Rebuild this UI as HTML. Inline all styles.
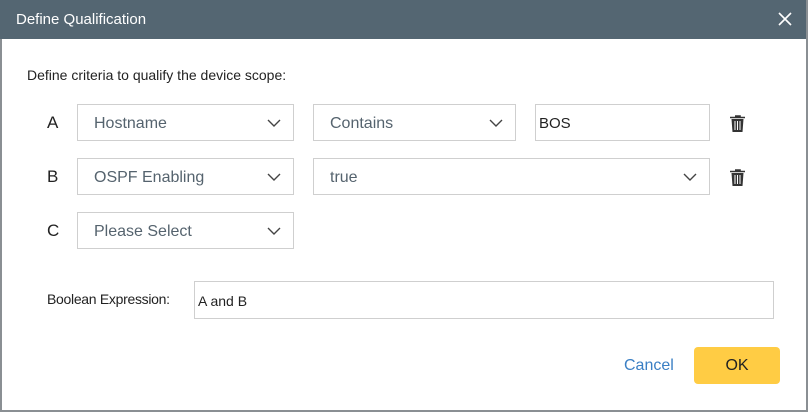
<!DOCTYPE html><html><head><style>
body{margin:0;width:808px;height:414px;background:#fff;font-family:"Liberation Sans",sans-serif;position:relative;overflow:hidden}
.dlg{position:absolute;left:0;top:0;width:804px;height:410px;border:2px solid #8a8f93;border-top:none;box-sizing:content-box;background:#fff}
.hd{position:absolute;left:0;top:0;width:806px;height:39px;background:#546672;color:#fff;font-size:15px;line-height:40px;padding-left:16px;box-sizing:border-box}
.x{position:absolute;right:14px;top:12px}
.a{position:absolute;font-size:14px;color:#222}
.box{position:absolute;border:1px solid #cfcfcf;height:37px;box-sizing:border-box;font-size:16px;color:#55636e;line-height:37px;padding-left:16px}
.chev{position:absolute;right:12px;top:14px}
.lbl{position:absolute;font-size:17px;color:#222}
.tr{position:absolute}
</style></head><body>
<div class="dlg"></div>
<div class="hd">Define Qualification
<svg class="x" width="14" height="14" viewBox="0 0 14 14"><path d="M1 1L13 13M13 1L1 13" stroke="#fff" stroke-width="1.6"/></svg></div>
<div class="a" style="left:27px;top:67px">Define criteria to qualify the device scope:</div>
<div class="lbl" style="left:47px;top:113px">A</div>
<div class="lbl" style="left:47px;top:167px">B</div>
<div class="lbl" style="left:47px;top:221px">C</div>
<div class="box" style="left:77px;top:104px;width:217px">Hostname<svg class="chev" width="14" height="9" viewBox="0 0 14 9"><path d="M1 1L7 7L13 1" fill="none" stroke="#444" stroke-width="1.4"/></svg></div>
<div class="box" style="left:313px;top:104px;width:203px">Contains<svg class="chev" width="14" height="9" viewBox="0 0 14 9"><path d="M1 1L7 7L13 1" fill="none" stroke="#444" stroke-width="1.4"/></svg></div>
<div class="box" style="left:535px;top:104px;width:175px;padding-left:3px;color:#222;font-size:15px">BOS</div>
<div class="box" style="left:77px;top:158px;width:217px">OSPF Enabling<svg class="chev" width="14" height="9" viewBox="0 0 14 9"><path d="M1 1L7 7L13 1" fill="none" stroke="#444" stroke-width="1.4"/></svg></div>
<div class="box" style="left:313px;top:158px;width:397px">true<svg class="chev" width="14" height="9" viewBox="0 0 14 9"><path d="M1 1L7 7L13 1" fill="none" stroke="#444" stroke-width="1.4"/></svg></div>
<div class="box" style="left:77px;top:212px;width:217px">Please Select<svg class="chev" width="14" height="9" viewBox="0 0 14 9"><path d="M1 1L7 7L13 1" fill="none" stroke="#444" stroke-width="1.4"/></svg></div>
<svg class="tr" style="left:729px;top:114px" width="17" height="19" viewBox="0 0 17 19"><path d="M6 2h5v1.5M1 3.5h15" stroke="#333" stroke-width="1.6" fill="none"/><path d="M2.5 5h12l-1 13h-10z" fill="#333"/><path d="M6 7v9M8.5 7v9M11 7v9" stroke="#fff" stroke-width="1"/></svg>
<svg class="tr" style="left:729px;top:168px" width="17" height="19" viewBox="0 0 17 19"><path d="M6 2h5v1.5M1 3.5h15" stroke="#333" stroke-width="1.6" fill="none"/><path d="M2.5 5h12l-1 13h-10z" fill="#333"/><path d="M6 7v9M8.5 7v9M11 7v9" stroke="#fff" stroke-width="1"/></svg>
<div class="a" style="left:47px;top:291px;font-size:14px;letter-spacing:-0.3px">Boolean Expression:</div>
<div class="box" style="left:194px;top:281px;width:580px;height:38px;padding-left:3px;color:#222;font-size:14px;line-height:38px">A and B</div>
<div class="a" style="left:624px;top:357px;font-size:16px;color:#3a7fc4">Cancel</div>
<div style="position:absolute;left:694px;top:347px;width:86px;height:37px;background:#ffcc44;border-radius:4px;text-align:center;line-height:38px;font-size:16px;color:#222">OK</div>
</body></html>
